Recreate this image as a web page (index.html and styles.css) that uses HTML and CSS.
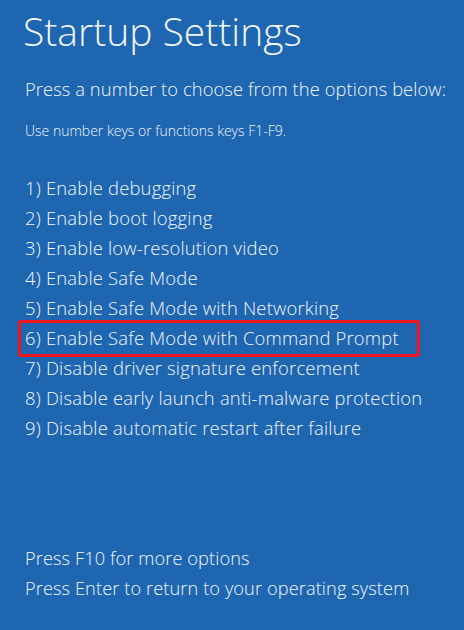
FILE: index.html
```html
<!DOCTYPE html>
<html lang="en">
<head>
<meta charset="utf-8">
<title>Startup Settings</title>
<link rel="stylesheet" href="styles.css">
</head>
<body>
<main class="screen">
  <h1 class="title">Startup Settings</h1>
  <p class="lead">Press a number to choose from the options below:</p>
  <p class="hint">Use number keys or functions keys F1-F9.</p>
  <ol class="options">
    <li class="option">1) Enable debugging</li>
    <li class="option">2) Enable boot logging</li>
    <li class="option">3) Enable low-resolution video</li>
    <li class="option">4) Enable Safe Mode</li>
    <li class="option">5) Enable Safe Mode with Networking</li>
    <li class="option option--marked">6) Enable Safe Mode with Command Prompt</li>
    <li class="option">7) Disable driver signature enforcement</li>
    <li class="option">8) Disable early launch anti-malware protection</li>
    <li class="option">9) Disable automatic restart after failure</li>
  </ol>
  <div class="footer">
    <p class="footer-line">Press F10 for more options</p>
    <p class="footer-line">Press Enter to return to your operating system</p>
  </div>
</main>
</body>
</html>
```

FILE: styles.css
```css
* {
  box-sizing: border-box;
}

html,
body {
  margin: 0;
  padding: 0;
  height: 100%;
}

body {
  background: #1f66b1;
  color: #f2f6fb;
  font-family: "Open Sans", "Noto Sans", sans-serif;
  font-weight: 300;
}

.screen {
  display: flex;
  flex-direction: column;
  height: 100%;
  padding: 0 0 0 25px;
}

.title {
  margin: 5px 0 0 -2px;
  font-size: 39px;
  font-weight: 300;
  line-height: 52px;
}

.lead {
  margin: 19px 0 0;
  font-size: 18.3px;
  letter-spacing: 0.1px;
  line-height: 26px;
}

.hint {
  margin: 20px 0 0;
  font-size: 14px;
  line-height: 18px;
}

.options {
  list-style: none;
  margin: 33px 0 0;
  padding: 0;
  display: flex;
  flex-direction: column;
  font-size: 18.4px;
  letter-spacing: 0.2px;
  line-height: 30px;
}

.option {
  position: relative;
}

/* red highlight frame around the chosen entry */
.option--marked::after {
  content: "";
  position: absolute;
  left: -7px;
  top: -3px;
  width: 396px;
  height: 31px;
  border: 3px solid #f0141e;
  border-radius: 3px;
}

.footer {
  margin-top: auto;
  padding-bottom: 27px;
  font-size: 18.2px;
  letter-spacing: 0.1px;
  line-height: 30px;
}

.footer-line {
  margin: 0;
}
```
